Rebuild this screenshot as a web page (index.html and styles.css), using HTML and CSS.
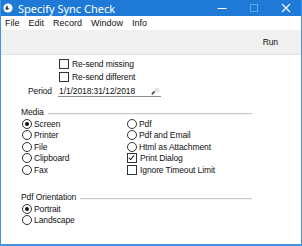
FILE: index.html
```html
<!DOCTYPE html>
<html lang="en">
<head>
    <meta charset="UTF-8">
    <title>Specify Sync Check</title>
    <link rel="stylesheet" href="styles.css">
</head>
<body>
    <div class="window">
        <div class="titlebar">
            <svg class="app-icon" width="10" height="10" viewBox="0 0 10 10">
                <circle cx="5" cy="5" r="4.6" fill="#fff"/>
                <path d="M3 6.8 C2 5 3 2.6 5.2 2.4 C4.2 3.4 4.4 5 6.2 5.6 C5.4 6.6 4.2 7.2 3 6.8 Z" fill="#1f3f66"/>
            </svg>
            <span class="title">Specify Sync Check</span>
            <div class="controls">
                <svg width="10" height="10" viewBox="0 0 10 10"><path d="M0.5 5.5 H9.5" stroke="#fff" stroke-width="1"/></svg>
                <svg class="disabled" width="10" height="10" viewBox="0 0 10 10"><rect x="1.5" y="1.5" width="7" height="7" fill="none" stroke="#5fa6ea" stroke-width="1"/></svg>
                <svg width="10" height="10" viewBox="0 0 10 10"><path d="M1 1 L9 9 M9 1 L1 9" stroke="#fff" stroke-width="1.1"/></svg>
            </div>
        </div>
        <div class="menubar">
            <span>File</span>
            <span>Edit</span>
            <span>Record</span>
            <span>Window</span>
            <span>Info</span>
        </div>
        <div class="toolbar">
            <span class="run">Run</span>
        </div>
        <div class="content">
            <div class="row check-only">
                <span class="box"></span>Re-send missing
            </div>
            <div class="row check-only">
                <span class="box"></span>Re-send different
            </div>
            <div class="row period">
                <span class="label">Period</span>
                <div class="field">
                    1/1/2018:31/12/2018
                    <svg class="lookup" width="9" height="8" viewBox="0 0 9 8">
                        <circle cx="6" cy="3" r="2.6" fill="#e4e4e4"/>
                        <path d="M0.8 7.2 L3.6 4.6" stroke="#222" stroke-width="1.4"/>
                    </svg>
                </div>
            </div>

            <div class="section-head media-head">
                <span>Media</span>
                <div class="rule"></div>
            </div>
            <div class="options">
                <div class="row"><span class="radio on"></span>Screen</div>
                <div class="row"><span class="radio"></span>Pdf</div>
                <div class="row"><span class="radio"></span>Printer</div>
                <div class="row"><span class="radio"></span>Pdf and Email</div>
                <div class="row"><span class="radio"></span>File</div>
                <div class="row"><span class="radio"></span>Html as Attachment</div>
                <div class="row"><span class="radio"></span>Clipboard</div>
                <div class="row"><span class="box checked"></span>Print Dialog</div>
                <div class="row"><span class="radio"></span>Fax</div>
                <div class="row"><span class="box"></span>Ignore Timeout Limit</div>
            </div>

            <div class="section-head orient-head">
                <span>Pdf Orientation</span>
                <div class="rule"></div>
            </div>
            <div class="options single">
                <div class="row"><span class="radio on"></span>Portrait</div>
                <div class="row"><span class="radio"></span>Landscape</div>
            </div>
        </div>
    </div>
</body>
</html>
```

FILE: styles.css
```css
body {
    margin: 0;
    font-family: "Liberation Sans", Arial, sans-serif;
    font-size: 8.5px;
    letter-spacing: -0.1px;
    color: #111;
    background: #fff;
}
.window {
    width: 302px;
    height: 246px;
    box-sizing: border-box;
    border: 1px solid #3f95e4;
    border-top: none;
    border-bottom-width: 2px;
    display: flex;
    flex-direction: column;
    overflow: hidden;
}
.titlebar {
    height: 16px;
    margin: 0 -1px;
    background-color: #1e7ad6;
    color: #fff;
    display: flex;
    align-items: center;
    padding-left: 3px;
    letter-spacing: 0;
}
.app-icon {
    margin-right: 5px;
}
.title {
    font-family: "Noto Sans", "Liberation Sans", sans-serif;
    font-size: 11px;
}
.controls {
    margin-left: auto;
    display: flex;
    gap: 22px;
    padding-right: 11px;
}
.menubar {
    height: 14px;
    display: flex;
    align-items: center;
    gap: 9px;
    padding-left: 4px;
    font-size: 9px;
    letter-spacing: 0;
}
.toolbar {
    height: 24px;
    background-color: #f0f0f0;
    border-bottom: 1px solid #e2e2e2;
    display: flex;
    align-items: center;
    justify-content: flex-end;
    padding-right: 23px;
}
.content {
    flex: 1;
    padding-top: 3px;
}
.row {
    height: 11.5px;
    display: flex;
    align-items: center;
    white-space: nowrap;
}
.check-only {
    height: 12px;
    margin-left: 58px;
    margin-bottom: 1px;
}
.box {
    width: 8px;
    height: 8px;
    border: 1px solid #333;
    background: #fff;
    margin-right: 3px;
    position: relative;
    flex-shrink: 0;
}
.box.checked::after {
    content: "";
    position: absolute;
    left: 2px;
    top: 0px;
    width: 2px;
    height: 5px;
    border: solid #222;
    border-width: 0 1px 1px 0;
    transform: rotate(40deg);
}
.radio {
    width: 8px;
    height: 8px;
    border: 1px solid #333;
    border-radius: 50%;
    background: #fff;
    margin-right: 2px;
    position: relative;
    flex-shrink: 0;
}
.radio.on::after {
    content: "";
    position: absolute;
    left: 2px;
    top: 2px;
    width: 4px;
    height: 4px;
    border-radius: 50%;
    background: #111;
}
.period {
    height: 12px;
    margin-top: 2px;
}
.period .label {
    width: 51px;
    text-align: right;
    margin-right: 6px;
}
.field {
    width: 103px;
    height: 11px;
    border-bottom: 1px solid #8c8c8c;
    display: flex;
    align-items: center;
    padding-left: 1px;
    box-sizing: border-box;
}
.lookup {
    margin-left: auto;
    margin-right: 1px;
}
.section-head {
    height: 12px;
    display: flex;
    align-items: center;
    margin-left: 20px;
    width: 231px;
}
.section-head .rule {
    flex: 1;
    height: 1px;
    background: #c8c8c8;
    margin-left: 4px;
    margin-top: 4px;
    border-bottom: 1px solid #f4f4f4;
}
.media-head {
    margin-top: 9px;
}
.orient-head {
    margin-top: 15.5px;
}
.options {
    display: grid;
    grid-template-columns: 105px auto;
    margin-left: 21px;
}
.options.single {
    grid-template-columns: auto;
}
```
